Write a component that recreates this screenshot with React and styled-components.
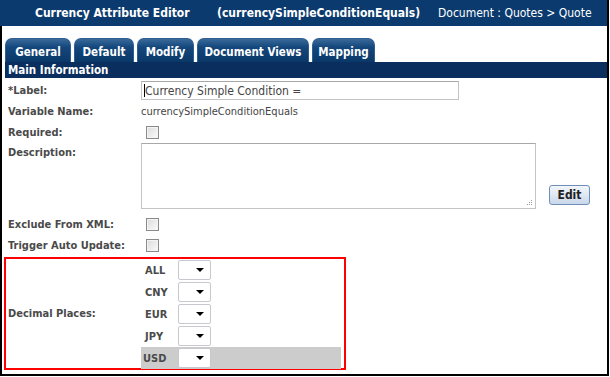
import React from "react";
import styled, { createGlobalStyle } from "styled-components";

const GlobalStyle = createGlobalStyle`
  html, body {
    margin: 0;
    padding: 0;
    background: #fff;
    font-family: Tahoma, "DejaVu Sans Condensed", "Liberation Sans", sans-serif;
  }
`;

const Frame = styled.div`
  width: 607px;
  height: 376px;
  border-right: 2px solid #000;
  display: flex;
  flex-direction: column;
`;

const Header = styled.div`
  height: 26px;
  background: #0b3b6e;
  color: #fff;
  display: flex;
  align-items: center;
  font-size: 12px;
  padding-left: 35px;
`;

const HeaderTitle = styled.span`
  font-weight: bold;
  width: ${p => p.w}px;
`;

const Crumb = styled.span`
  font-weight: normal;
`;

const Body = styled.div`
  flex: 1;
  border-left: 2px solid #000;
  border-bottom: 2px solid #000;
  padding: 12px 0 0 3px;
  display: flex;
  flex-direction: column;
`;

const Tabs = styled.div`
  display: flex;
  gap: 3px;
  height: 24px;
`;

const Tab = styled.div`
  width: ${p => p.w}px;
  box-sizing: border-box;
  height: 24px;
  border: 1px solid #2e5d8f;
  border-bottom: none;
  border-radius: 7px 7px 0 0;
  background: linear-gradient(#3a6a9a 0%, #14477c 35%, #0a3868 100%);
  color: #fff;
  font-weight: bold;
  font-size: 11.5px;
  display: flex;
  align-items: center;
  justify-content: center;
  padding-top: 2px;
`;

const Section = styled.div`
  height: 16px;
  background: #0a2e5e;
  color: #fff;
  font-weight: bold;
  font-size: 11.5px;
  line-height: 16px;
  padding-left: 3px;
`;

const Form = styled.div`
  display: flex;
  flex-direction: column;
  padding-left: 3px;
  padding-top: 2px;
`;

const Row = styled.div`
  display: flex;
  align-items: ${p => (p.top ? "flex-start" : "center")};
  min-height: ${p => p.h || 21}px;
`;

const Label = styled.div`
  width: 133px;
  font-weight: bold;
  font-size: 11px;
  color: #4a4a4a;
  padding-top: ${p => (p.top ? 3 : 0)}px;
`;

const TextInput = styled.div`
  width: 318px;
  height: 19px;
  box-sizing: border-box;
  border: 1px solid #c4c4c4;
  border-top-color: #a8a8a8;
  font-size: 12px;
  color: #444;
  display: flex;
  align-items: center;
  padding-left: 2px;
`;

const Caret = styled.span`
  display: inline-block;
  width: 1px;
  height: 13px;
  background: #000;
`;

const Value = styled.div`
  font-size: 11px;
  color: #444;
`;

const Check = styled.span`
  display: block;
  width: 11px;
  height: 11px;
  margin-left: 5px;
  border: 1px solid #8a8a8a;
  background: linear-gradient(135deg, #dcdcdc, #fafafa);
  box-shadow: inset 0 0 0 1px #f4f4f4;
`;

const TextArea = styled.div`
  position: relative;
  width: 395px;
  height: 66px;
  box-sizing: border-box;
  border: 1px solid #c4c4c4;
  border-top-color: #a8a8a8;
`;

const Grip = styled.svg`
  position: absolute;
  right: 2px;
  bottom: 2px;
`;

const EditButton = styled.div`
  margin-left: 13px;
  margin-top: 42px;
  width: 41px;
  height: 20px;
  box-sizing: border-box;
  border: 1px solid #6f8fba;
  border-radius: 3px;
  background: linear-gradient(#f2f6fb 0%, #dfe8f4 50%, #c9d7ea 100%);
  font-weight: bold;
  font-size: 12px;
  color: #222;
  display: flex;
  align-items: center;
  justify-content: center;
`;

const DecimalBox = styled.div`
  margin: 1px 0 0 -4px;
  width: 342px;
  height: 113px;
  box-sizing: border-box;
  border: 2px solid #f00;
  display: flex;
  align-items: center;
  padding: 0 0 0 2px;
`;

const CurrencyList = styled.div`
  display: flex;
  flex-direction: column;
  align-self: flex-start;
`;

const CurrencyRow = styled.div`
  width: 200px;
  height: 22px;
  display: flex;
  align-items: center;
  background: ${p => (p.active ? "#cccccc" : "transparent")};
`;

const Code = styled.div`
  width: 37px;
  font-weight: bold;
  font-size: 11px;
  color: #4a4a4a;
  padding-left: ${p => p.pad}px;
  box-sizing: border-box;
`;

const Select = styled.div`
  width: 33px;
  height: 20px;
  box-sizing: border-box;
  border: 1px solid #c8c8d0;
  border-radius: 2px;
  background: #fff;
  display: flex;
  align-items: center;
  justify-content: flex-end;
  padding-right: 6px;
`;

const Arrow = () => (
  <svg width="8" height="4" viewBox="0 0 8 4">
    <path d="M0 0 H8 L4 4 Z" fill="#000" />
  </svg>
);

const currencies = [
  { code: "ALL", pad: 4 },
  { code: "CNY", pad: 4 },
  { code: "EUR", pad: 4 },
  { code: "JPY", pad: 4 },
  { code: "USD", pad: 2, active: true },
];

const tabs = [
  { name: "General", w: 66 },
  { name: "Default", w: 60 },
  { name: "Modify", w: 57 },
  { name: "Document Views", w: 112 },
  { name: "Mapping", w: 63 },
];

export default function App() {
  return (
    <>
      <GlobalStyle />
      <Frame>
        <Header>
          <HeaderTitle w={182}>Currency Attribute Editor</HeaderTitle>
          <HeaderTitle w={221}>(currencySimpleConditionEquals)</HeaderTitle>
          <Crumb>Document : Quotes &gt; Quote</Crumb>
        </Header>
        <Body>
          <Tabs>
            {tabs.map(t => (
              <Tab key={t.name} w={t.w}>{t.name}</Tab>
            ))}
          </Tabs>
          <Section>Main Information</Section>
          <Form>
            <Row>
              <Label>*Label:</Label>
              <TextInput><Caret />Currency Simple Condition =</TextInput>
            </Row>
            <Row>
              <Label>Variable Name:</Label>
              <Value>currencySimpleConditionEquals</Value>
            </Row>
            <Row>
              <Label>Required:</Label>
              <Check />
            </Row>
            <Row top h={71}>
              <Label top>Description:</Label>
              <TextArea>
                <Grip width="6" height="6" viewBox="0 0 6 6">
                  <g fill="#999">
                    <rect x="4" y="0" width="1" height="1" />
                    <rect x="2" y="2" width="1" height="1" />
                    <rect x="4" y="2" width="1" height="1" />
                    <rect x="0" y="4" width="1" height="1" />
                    <rect x="2" y="4" width="1" height="1" />
                    <rect x="4" y="4" width="1" height="1" />
                  </g>
                </Grip>
              </TextArea>
              <EditButton>Edit</EditButton>
            </Row>
            <Row>
              <Label>Exclude From XML:</Label>
              <Check />
            </Row>
            <Row>
              <Label>Trigger Auto Update:</Label>
              <Check />
            </Row>
            <DecimalBox>
              <Label>Decimal Places:</Label>
              <CurrencyList>
                {currencies.map(c => (
                  <CurrencyRow key={c.code} active={c.active}>
                    <Code pad={c.pad}>{c.code}</Code>
                    <Select><Arrow /></Select>
                  </CurrencyRow>
                ))}
              </CurrencyList>
            </DecimalBox>
          </Form>
        </Body>
      </Frame>
    </>
  );
}
